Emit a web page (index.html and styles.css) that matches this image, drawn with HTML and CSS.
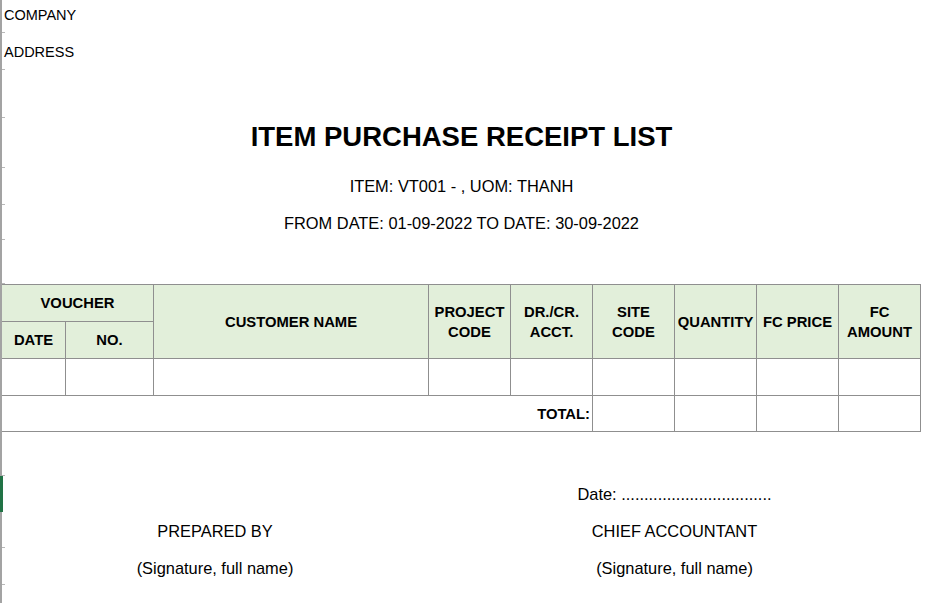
FILE: index.html
```html
<!DOCTYPE html>
<html lang="en">
<head>
<meta charset="utf-8">
<title>Item Purchase Receipt List</title>
<link rel="stylesheet" href="styles.css">
</head>
<body>
<div class="sheet">
  <div class="row row-company"><span class="plain">COMPANY</span></div>
  <div class="row row-address"><span class="plain">ADDRESS</span></div>
  <div class="row row-blank-a"></div>
  <div class="row row-title"><h1 class="title">ITEM PURCHASE RECEIPT LIST</h1></div>
  <div class="row row-sub"><span>ITEM: VT001 - , UOM: THANH</span></div>
  <div class="row row-sub2"><span>FROM DATE: 01-09-2022 TO DATE: 30-09-2022</span></div>
  <div class="row row-blank-b"></div>

  <div class="ledger">
    <div class="cell head span-2c">VOUCHER</div>
    <div class="cell head span-2r">CUSTOMER NAME</div>
    <div class="cell head span-2r">PROJECT<br>CODE</div>
    <div class="cell head span-2r">DR./CR.<br>ACCT.</div>
    <div class="cell head span-2r">SITE<br>CODE</div>
    <div class="cell head span-2r">QUANTITY</div>
    <div class="cell head span-2r">FC PRICE</div>
    <div class="cell head span-2r">FC<br>AMOUNT</div>
    <div class="cell head">DATE</div>
    <div class="cell head">NO.</div>

    <div class="cell"></div>
    <div class="cell"></div>
    <div class="cell"></div>
    <div class="cell"></div>
    <div class="cell"></div>
    <div class="cell"></div>
    <div class="cell"></div>
    <div class="cell"></div>
    <div class="cell"></div>

    <div class="cell total span-5c">TOTAL:</div>
    <div class="cell"></div>
    <div class="cell"></div>
    <div class="cell"></div>
    <div class="cell"></div>
  </div>

  <div class="row row-blank-c"></div>
  <div class="sign-row sign-selected">
    <div></div>
    <div>Date: .................................</div>
  </div>
  <div class="sign-row">
    <div>PREPARED BY</div>
    <div>CHIEF ACCOUNTANT</div>
  </div>
  <div class="sign-row sign-last">
    <div>(Signature, full name)</div>
    <div>(Signature, full name)</div>
  </div>
</div>
</body>
</html>
```

FILE: styles.css
```css
html, body {
  margin: 0;
  padding: 0;
  background: #ffffff;
}

body {
  font-family: "Liberation Sans", Arial, sans-serif;
  color: #000000;
}

.sheet {
  width: 919px;
  min-height: 603px;
  border-left: 2px solid #a3a3a3;
}

.row {
  display: flex;
  align-items: center;
  box-sizing: border-box;
  background: linear-gradient(#b8b8b8, #b8b8b8) left bottom / 3px 1px no-repeat;
}

.row-company {
  height: 33px;
  padding-left: 2px;
  padding-bottom: 3px;
  font-size: 14.5px;
}

.row-address {
  height: 37px;
  padding-left: 2px;
  font-size: 14.5px;
}

.row-blank-a {
  height: 48px;
}

.row-title {
  height: 50px;
  justify-content: center;
  align-items: flex-start;
}

.title {
  margin: 0;
  padding-top: 3px;
  font-size: 27.5px;
  line-height: 32px;
  font-weight: 700;
}

.row-sub {
  height: 37px;
  justify-content: center;
  font-size: 16.4px;
}

.row-sub2 {
  height: 35px;
  padding-top: 2px;
  justify-content: center;
  font-size: 16.4px;
}

.row-blank-b {
  height: 44px;
}

.ledger {
  display: grid;
  width: max-content;
  grid-template-columns: 63px 87px 274px repeat(6, 81px);
  grid-template-rows: 36px 36px 36px 35px;
  gap: 1px;
  padding: 1px 1px 1px 0;
  background: #8f8f8f;
}

.cell {
  display: flex;
  align-items: center;
  justify-content: center;
  background: #ffffff;
  font-size: 14.8px;
  font-weight: 700;
  line-height: 20px;
  text-align: center;
}

.head {
  background: #e2efda;
}

.span-2c {
  grid-column: span 2;
}

.span-2r {
  grid-row: span 2;
}

.span-5c {
  grid-column: span 5;
}

.total {
  justify-content: flex-end;
  padding-right: 2px;
}

.row-blank-c {
  height: 44px;
}

.sign-row {
  display: grid;
  box-sizing: border-box;
  grid-template-columns: 426px 1fr;
  align-items: center;
  height: 36px;
  padding-top: 3px;
  font-size: 16.4px;
  text-align: center;
  background: linear-gradient(#b8b8b8, #b8b8b8) left bottom / 3px 1px no-repeat;
}

.sign-selected {
  margin-left: -2px;
  border-left: 3px solid #217346;
  grid-template-columns: 425px 1fr;
  padding-top: 1px;
  background: none;
}

.sign-last {
  height: 37px;
}
```
